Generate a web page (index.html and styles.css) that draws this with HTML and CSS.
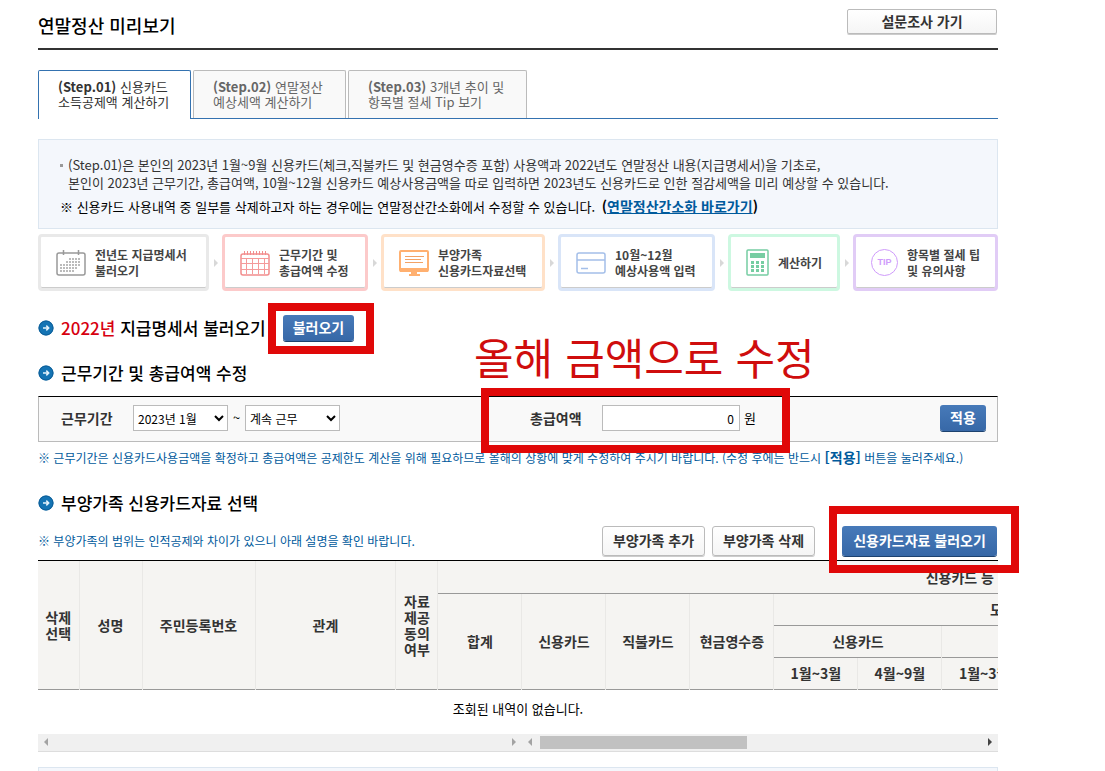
FILE: index.html
```html
<!DOCTYPE html>
<html lang="ko">
<head>
<meta charset="utf-8">
<title>연말정산 미리보기</title>
<link rel="stylesheet" href="styles.css">
</head>
<body>
<svg class="defs" aria-hidden="true">
  <symbol id="bullet" viewBox="0 0 16 16">
    <circle cx="8" cy="8" r="7.5" fill="#1474b4"/>
    <circle cx="8" cy="8" r="7" fill="none" stroke="#0e5e97"/>
    <path d="M5 8h5.500M8.300 5.600L10.700 8l-2.400 2.400" fill="none" stroke="#e4f3fc" stroke-width="1.500"/>
  </symbol>
</svg>
<main class="page">
  <header class="title-bar">
    <h1>연말정산 미리보기</h1>
    <button class="btn btn-survey" type="button">설문조사 가기</button>
  </header>

  <nav class="tabs">
    <a class="tab active" href="#step1"><b>(Step.01)</b> 신용카드<br>소득공제액 계산하기</a>
    <a class="tab" href="#step2"><b>(Step.02)</b> 연말정산<br>예상세액 계산하기</a>
    <a class="tab tab-wide" href="#step3"><b>(Step.03)</b> 3개년 추이 및<br>항목별 절세 Tip 보기</a>
  </nav>

  <section class="info">
    <ul>
      <li>(Step.01)은 본인의 2023년 1월~9월 신용카드(체크,직불카드 및 현금영수증 포함) 사용액과 2022년도 연말정산 내용(지급명세서)을 기초로,<br>본인이 2023년 근무기간, 총급여액, 10월~12월 신용카드 예상사용금액을 따로 입력하면 2023년도 신용카드로 인한 절감세액을 미리 예상할 수 있습니다.</li>
    </ul>
    <p>※ 신용카드 사용내역 중 일부를 삭제하고자 하는 경우에는 연말정산간소화에서 수정할 수 있습니다. <b>(<a href="#simple">연말정산간소화 바로가기</a>)</b></p>
  </section>

  <ol class="steps">
    <li class="step gray">
      <svg width="30" height="26" viewBox="0 0 30 26"><rect x="1" y="3" width="28" height="22" rx="2" fill="none" stroke="#999" stroke-width="1.500"/><path d="M7.500 0v5M22.500 0v5" stroke="#999" stroke-width="1.500"/><path d="M13 9h12M10 12h15M4 15h21M4 18h18M4 21h14" stroke="#bbb" stroke-width="2" stroke-dasharray="2 1"/></svg>
      <span>전년도 지급명세서<br>불러오기</span>
    </li>
    <li class="arrow"></li>
    <li class="step red">
      <svg width="30" height="26" viewBox="0 0 30 26"><rect x="1" y="4" width="28" height="21" rx="2" fill="none" stroke="#f28d8d" stroke-width="1.500"/><path d="M4.500 1v4M7.500 1v4M10.500 1v4M13.500 1v4M16.500 1v4M19.500 1v4M22.500 1v4M25.500 1v4" stroke="#f28d8d"/><path d="M1 8.500h28M1 13.500h28M1 19.500h28M6.500 8v16M12.500 8v16M18.500 8v16M24.500 8v16" stroke="#f49a9a"/></svg>
      <span>근무기간 및<br>총급여액 수정</span>
    </li>
    <li class="arrow"></li>
    <li class="step orange">
      <svg width="30" height="26" viewBox="0 0 30 26"><rect x="1" y="1" width="28" height="20" rx="1" fill="none" stroke="#ffb070" stroke-width="2"/><path d="M1 18h28v4H1zM12 21h6v3h3v2H10v-2h2z" fill="#ffb070"/><path d="M6 6.500h19M6 9.500h16M6 12.500h18" stroke="#f3a265"/></svg>
      <span>부양가족<br>신용카드자료선택</span>
    </li>
    <li class="arrow"></li>
    <li class="step blue">
      <svg width="30" height="22" viewBox="0 0 30 22"><rect x="1" y="1" width="28" height="20" rx="2" fill="none" stroke="#a4bfe9" stroke-width="1.500"/><path d="M1 8h28M5 16.500h7" stroke="#a4bfe9" stroke-width="1.500"/></svg>
      <span>10월~12월<br>예상사용액 입력</span>
    </li>
    <li class="arrow"></li>
    <li class="step green">
      <svg width="23" height="27" viewBox="0 0 23 27"><rect x="1" y="1" width="21" height="25" rx="1" fill="none" stroke="#76cda2" stroke-width="1.500"/><path d="M4 4h15v5H4z" fill="#76cda2"/><path d="M5 13.500h13M5 17.500h13M5 21.500h13" stroke="#76cda2" stroke-width="3" stroke-dasharray="3 2"/></svg>
      <span>계산하기</span>
    </li>
    <li class="arrow"></li>
    <li class="step purple">
      <i class="tip">TIP</i>
      <span>항목별 절세 팁<br>및 유의사항</span>
    </li>
  </ol>

  <div class="section-head first">
    <svg class="bullet"><use href="#bullet"/></svg>
    <h2><em>2022년</em> 지급명세서 불러오기</h2>
    <span class="marked mark-load"><button class="btn btn-blue btn-load" type="button">불러오기</button></span>
  </div>

  <div class="section-head second">
    <svg class="bullet"><use href="#bullet"/></svg>
    <h2>근무기간 및 총급여액 수정</h2>
  </div>

  <form class="period">
    <div class="fields">
      <label for="from">근무기간</label>
      <select id="from"><option>2023년 1월</option></select>
      <span class="tilde">~</span>
      <select id="to" aria-label="종료"><option>계속 근무</option></select>
    </div>
    <div class="fields marked mark-pay">
      <strong class="callout">올해 금액으로 수정</strong>
      <label for="pay">총급여액</label>
      <input id="pay" type="text" value="0">
      <span class="unit">원</span>
    </div>
    <button class="btn btn-blue btn-apply" type="button">적용</button>
  </form>
  <p class="note">※ 근무기간은 신용카드사용금액을 확정하고 총급여액은 공제한도 계산을 위해 필요하므로 올해의 상황에 맞게 수정하여 주시기 바랍니다. (수정 후에는 반드시 <b>[적용]</b> 버튼을 눌러주세요.)</p>

  <div class="section-head third">
    <svg class="bullet"><use href="#bullet"/></svg>
    <h2>부양가족 신용카드자료 선택</h2>
  </div>

  <div class="toolbar">
    <p class="note">※ 부양가족의 범위는 인적공제와 차이가 있으니 아래 설명을 확인 바랍니다.</p>
    <button class="btn" type="button">부양가족 추가</button>
    <button class="btn" type="button">부양가족 삭제</button>
    <span class="marked mark-card"><button class="btn btn-blue btn-card" type="button">신용카드자료 불러오기</button></span>
  </div>

  <div class="grid">
    <table>
      <colgroup><col class="c-check"><col class="c-name"><col class="c-id"><col class="c-rel"><col class="c-agree"><col span="7" class="c-amount"></colgroup>
      <thead>
        <tr><th rowspan="4">삭제<br>선택</th><th rowspan="4">성명</th><th rowspan="4">주민등록번호</th><th rowspan="4">관계</th><th rowspan="4">자료<br>제공<br>동의<br>여부</th><th colspan="7" class="group">신용카드 등</th></tr>
        <tr><th rowspan="3">합계</th><th rowspan="3">신용카드</th><th rowspan="3">직불카드</th><th rowspan="3">현금영수증</th><th colspan="3" class="subgroup">도</th></tr>
        <tr><th colspan="2">신용카드</th><th></th></tr>
        <tr><th>1월~3월</th><th>4월~9월</th><th>1월~3월</th></tr>
      </thead>
    </table>
    <p class="empty">조회된 내역이 없습니다.</p>
    <div class="scrollbars">
      <div class="scroll scroll-left"><i class="prev"></i><i class="next"></i></div>
      <div class="scroll scroll-right"><i class="prev"></i><span class="track"><span class="thumb"></span></span><i class="next dark"></i></div>
    </div>
  </div>
  <section class="info info-next"></section>
</main>
</body>
</html>
```
FILE: styles.css
```css
*, ::after { box-sizing: border-box; }
html { overflow: hidden; }
body {
  margin: 0;
  background: #fff;
  color: #333;
  font: 13px/18px "Noto Sans CJK KR", sans-serif;
}
h1, h2, p, ul, ol { margin: 0; padding: 0; list-style: none; }
button, input, select { font: inherit; margin: 0; }
.defs { position: absolute; width: 0; height: 0; }
.page { padding: 0 107px 0 38px; height: 100vh; overflow: hidden; }

.title-bar {
  display: flex;
  justify-content: space-between;
  align-items: flex-start;
  height: 50px;
  padding: 9px 1px 0 0;
  border-bottom: 2px solid #333;
}
h1 { font-size: 18px; line-height: 32px; font-weight: 500; color: #000; }

.btn {
  height: 30px;
  padding: 0 10px 2px;
  border: 1px solid #bbb;
  border-radius: 3px;
  background: linear-gradient(#fff, #f5f5f5);
  box-shadow: 0 1px 0 #ccc;
  color: #333;
  font-size: 14px;
  line-height: 18px;
  font-weight: 700;
  white-space: nowrap;
}
.btn-survey { width: 150px; height: 25px; border-radius: 2px; }
.btn-blue {
  height: 25px;
  border: 0;
  background: linear-gradient(#477ab9, #3768a7);
  box-shadow: 0 1px 0 #1d426f;
  color: #fff;
}

.tabs {
  display: flex;
  gap: 2px;
  margin-top: 20px;
  height: 49px;
  border-bottom: 1px solid #3472b0;
}
.tab {
  width: 153px;
  height: 48px;
  padding: 8px 0 0 19px;
  border: 1px solid #bbb;
  border-bottom: 0;
  border-radius: 2px 2px 0 0;
  background: #f9f9f9;
  color: #666;
  font-size: 13px;
  line-height: 15px;
  text-decoration: none;
  white-space: nowrap;
}
.tab-wide { width: 179px; }
.tab.active { height: 49px; background: #fff; border-color: #3472b0; color: #333; }

.info {
  margin-top: 20px;
  height: 90px;
  padding: 16px 21px;
  border: 1px solid #dce6f0;
  background: #f4f7fc;
  font-size: 13px;
  white-space: nowrap;
}
.info li { padding-left: 8px; background: linear-gradient(#999, #999) 0 8px / 3px 3px no-repeat; }
.info p { margin-top: 5px; color: #000; }
.info b { margin-left: 3px; font-size: 14px; }
.info a { color: #005a9c; }
.info-next { margin-top: 15px; }

.steps {
  display: grid;
  grid-template-columns: 171fr 13px 146fr 13px 164fr 13px 157fr 13px 112fr 13px 145fr;
  align-items: center;
  margin-top: 5px;
}
.step {
  display: flex;
  align-items: center;
  gap: 9px;
  height: 57px;
  padding-left: 15px;
  border: 3px solid;
  border-radius: 4px;
  box-shadow: inset 0 -1px 0 #ccc;
  color: #444;
  font-size: 12px;
  line-height: 16px;
  font-weight: 700;
  white-space: nowrap;
}
.step svg { flex: none; }
.gray { border-color: #e9e9e9; }
.red { border-color: #fccaca; }
.orange { border-color: #ffe1c8; }
.blue { border-color: #d9e5f8; }
.green { border-color: #cdf8e1; }
.purple { border-color: #e1ccf6; }
.arrow { width: 0; margin-left: 5px; border: 4px solid transparent; border-left-color: #d8d8d8; border-right: 0; }
.tip {
  width: 27px;
  height: 27px;
  border: 1px solid #cf9bfb;
  border-radius: 50%;
  color: #cf9bfb;
  font: 700 9px/25px "Liberation Sans", sans-serif;
  text-align: center;
}

.section-head { display: flex; align-items: center; height: 26px; }
.bullet { width: 16px; height: 16px; margin-right: 7px; }
h2 { font-size: 17px; line-height: 26px; font-weight: 500; color: #000; white-space: nowrap; }
h2 em { font-style: normal; color: #d7000f; }
.first { margin-top: 24px; }
.second { margin-top: 19px; }
.third { margin-top: 23px; }

/* Red emphasis frames lying over the form */
.marked { position: relative; }
.marked::after { content: ""; position: absolute; border: 8px solid #e00808; pointer-events: none; z-index: 1; }
.mark-load { margin-left: 17px; }
.mark-load .btn { display: block; }
.mark-load::after { inset: -12px -20px -13px -15px; }
.mark-pay::after { top: -17px; bottom: -22px; left: -49px; width: 309px; }
.mark-card::after { inset: -20px -22px -17px -13px; }
.callout {
  position: absolute;
  left: -56px;
  top: -79px;
  color: #cf0d0d;
  font-size: 43px;
  line-height: 60px;
  font-weight: 400;
  white-space: nowrap;
}

.period {
  display: grid;
  grid-template-columns: 469fr 410fr 46px;
  align-items: center;
  height: 46px;
  margin-top: 10px;
  padding: 0 11px 2px 22px;
  border: 1px solid #bbb;
  border-top-color: #000;
  background: #f9f9f9;
}
.fields { display: flex; align-items: center; color: #000; }
.fields label { width: 72px; color: #333; font-size: 14px; font-weight: 700; }
.fields select, .fields input { height: 26px; border: 1px solid #bbb; border-radius: 0; background: #fff; color: #000; font-size: 12px; }
.fields select { width: 95px; padding: 0; }
.fields input { width: 138px; padding: 0 5px; text-align: right; }
.tilde { width: 17px; text-align: center; }
.unit { margin-left: 4px; }
.btn-load, .btn-apply { height: 26px; }
.btn-apply { padding: 0 0 2px; }

.note { color: #005a9c; font-size: 12px; white-space: nowrap; }
.note b { font-size: 14px; }
.period + .note { margin-top: 6px; }
.toolbar { display: flex; align-items: center; gap: 7px; margin-top: 10px; padding: 0 1px 4px 0; }
.toolbar .note { flex: 1; }
.toolbar .btn { width: 103px; display: block; padding: 0 0 2px; }
.toolbar .mark-card { margin-left: 20px; }
.toolbar .btn-card { width: 155px; height: 30px; }

.grid { overflow: hidden; border-top: 1px solid #000; }
table { width: calc(100% + 28px); table-layout: fixed; border-collapse: collapse; border-bottom: 1px solid #999; background: #f5f4f2; }
.c-check { width: 41px; }
.c-name { width: 63px; }
.c-id { width: 113px; }
.c-rel { width: auto; }
.c-agree { width: 42px; }
.c-amount { width: 84px; }
th { height: 32px; padding: 0; border: 1px solid #e9e8e6; border-width: 0 0 0 1px; font-size: 14px; line-height: 16px; font-weight: 700; }
thead tr:first-child th:first-child { border-left: 0; }
thead tr + tr th { border-top: 1px solid #999; }
th.group { padding-right: 32px; text-align: right; }
th.subgroup { padding-right: 23px; text-align: right; }
.empty { padding: 10px 0 16px; color: #000; font-size: 13px; text-align: center; }

.scrollbars { display: flex; height: 18px; background: #f0f0f0; border-bottom: 1px solid #ddd; }
.scroll { display: flex; align-items: center; justify-content: space-between; padding: 0 6px; }
.scroll-left { flex: 484; }
.scroll-right { flex: 476; }
.scroll i { width: 0; border: 4px solid transparent; }
.scroll .prev { border-right-color: #a3a3a3; border-left: 0; }
.scroll .next { border-left-color: #a3a3a3; border-right: 0; }
.scroll .dark { border-left-color: #444; }
.track { flex: 1; margin: 0 8px; height: 13px; }
.thumb { display: block; width: 47%; height: 13px; background: #c1c1c1; }
```
